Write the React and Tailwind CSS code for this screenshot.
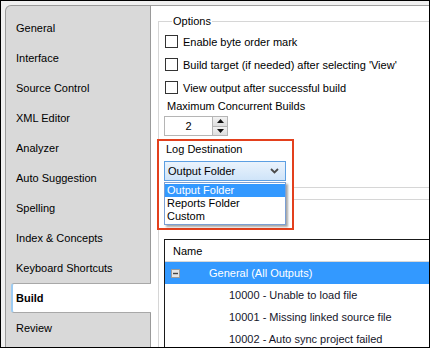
const tabs = [
  "General",
  "Interface",
  "Source Control",
  "XML Editor",
  "Analyzer",
  "Auto Suggestion",
  "Spelling",
  "Index & Concepts",
  "Keyboard Shortcuts",
  "Build",
  "Review",
];

const options = [
  "Enable byte order mark",
  "Build target (if needed) after selecting 'View'",
  "View output after successful build",
];

const messages = [
  "10000 - Unable to load file",
  "10001 - Missing linked source file",
  "10002 - Auto sync project failed",
];

function Sidebar() {
  return (
    <div className="w-[146px] shrink-0 flex flex-col pt-[7px] bg-[#d9d9d9] border-l border-t border-r border-[#9a9a9a] rounded-tl-[6px]">
      {tabs.map((tab) =>
        tab === "Build" ? (
          <div
            key={tab}
            className="h-[30px] -mr-px ml-[5px] flex items-center pl-[3px] bg-white border-t border-b border-[#a8a8a8] border-l-2 border-l-[#9ccbf2] rounded-l-[3px] font-bold"
          >
            {tab}
          </div>
        ) : (
          <div key={tab} className="h-[30px] flex items-center pl-[10px]">
            {tab}
          </div>
        )
      )}
    </div>
  );
}

function Checkbox({ label }) {
  return (
    <div className="h-[23px] flex items-center">
      <span className="w-[13px] h-[13px] border border-[#333] bg-white mr-[5px] shrink-0" />
      <span>{label}</span>
    </div>
  );
}

function SpinBox() {
  return (
    <div className="mt-[3px] -ml-px flex h-[20px] w-[64px]">
      <div className="w-[49px] border border-[#b5b5b5] flex items-center justify-center bg-white">2</div>
      <div className="w-[15px] flex flex-col border border-l-0 border-[#b5b5b5]">
        <div className="flex-1 flex items-center justify-center bg-gradient-to-b from-[#f2f2f2] to-[#dedede] border-b border-[#b5b5b5]">
          <svg width="7" height="4" viewBox="0 0 7 4"><path d="M3.5 0 L7 4 L0 4 Z" fill="#111" /></svg>
        </div>
        <div className="flex-1 flex items-center justify-center bg-gradient-to-b from-[#f2f2f2] to-[#dedede]">
          <svg width="7" height="4" viewBox="0 0 7 4"><path d="M0 0 L7 0 L3.5 4 Z" fill="#111" /></svg>
        </div>
      </div>
    </div>
  );
}

function LogDestination() {
  const items = ["Output Folder", "Reports Folder", "Custom"];
  return (
    <div className="relative z-10 mt-[3px] -ml-[8px] mb-[-43px] w-[137px] h-[91px] border-2 border-[#e3401d] bg-white">
      <div className="mt-[1px] h-[14px] leading-[14px] pl-[7px]">Log Destination</div>
      <div className="mt-[5px] ml-[5px] w-[122px] h-[20px] flex items-center justify-between pl-[3px] pr-[6px] border border-[#5c9fe2] bg-gradient-to-b from-[#eaf3fc] to-[#cfe4f9]">
        <span>Output Folder</span>
        <svg width="9" height="6" viewBox="0 0 9 6">
          <path d="M1 1 L4.5 4.5 L8 1" fill="none" stroke="#4a4a4a" strokeWidth="1.8" />
        </svg>
      </div>
      <div className="mt-[1px] ml-[5px] w-[122px] border border-[#7b9fd4] bg-white py-[1px] shadow-[2px_2px_2px_rgba(0,0,0,0.35)]">
        {items.map((item, i) => (
          <div
            key={item}
            className={
              i === 0
                ? "h-[13px] leading-[13px] pl-[2px] bg-[#3399ff] text-white"
                : "h-[13px] leading-[13px] pl-[2px]"
            }
          >
            {item}
          </div>
        ))}
      </div>
    </div>
  );
}

function MessageTable() {
  return (
    <div className="w-[300px] border-l border-t border-[#1a1a1a] bg-white">
      <div className="h-[22px] flex items-center pl-[8px] border-b border-[#d8d8d8]">Name</div>
      <div className="h-[22px] flex items-center bg-[#3399ff] text-white">
        <svg className="ml-[6px] mr-[29px]" width="9" height="9" viewBox="0 0 9 9">
          <rect x="0.5" y="0.5" width="8" height="8" fill="#e4e4e4" stroke="#9a9a9a" />
          <path d="M2 4.5 H7" stroke="#444" strokeWidth="1.4" />
        </svg>
        <span>General (All Outputs)</span>
      </div>
      {messages.map((m) => (
        <div key={m} className="h-[22px] flex items-center pl-[64px] text-[#15152a]">
          {m}
        </div>
      ))}
    </div>
  );
}

export default function App() {
  return (
    <div
      className="w-[430px] h-[348px] overflow-hidden flex border border-black bg-[#f0f0f0] pt-[4px] pl-[4px] text-[11px] leading-[14px] text-black"
      style={{ fontFamily: '"Liberation Sans", Arial, sans-serif' }}
    >
      <Sidebar />
      <div className="flex-1 bg-white border-t border-[#a0a0a0] pt-[8px] pl-[7px]">
        <fieldset className="w-[300px] border border-[#d6d6d6] pl-[6px] pb-0">
          <legend className="ml-[7px] px-[1px] leading-[14px]">Options</legend>
          <div className="mt-[2px]">
            {options.map((o) => (
              <Checkbox key={o} label={o} />
            ))}
          </div>
          <div className="h-[14px] pl-[2px]">Maximum Concurrent Builds</div>
          <SpinBox />
          <LogDestination />
        </fieldset>
        <div className="mt-[11px] w-[300px] h-[200px] border-l border-t border-[#d6d6d6] pl-[5px] pt-[39px]">
          <MessageTable />
        </div>
      </div>
    </div>
  );
}
